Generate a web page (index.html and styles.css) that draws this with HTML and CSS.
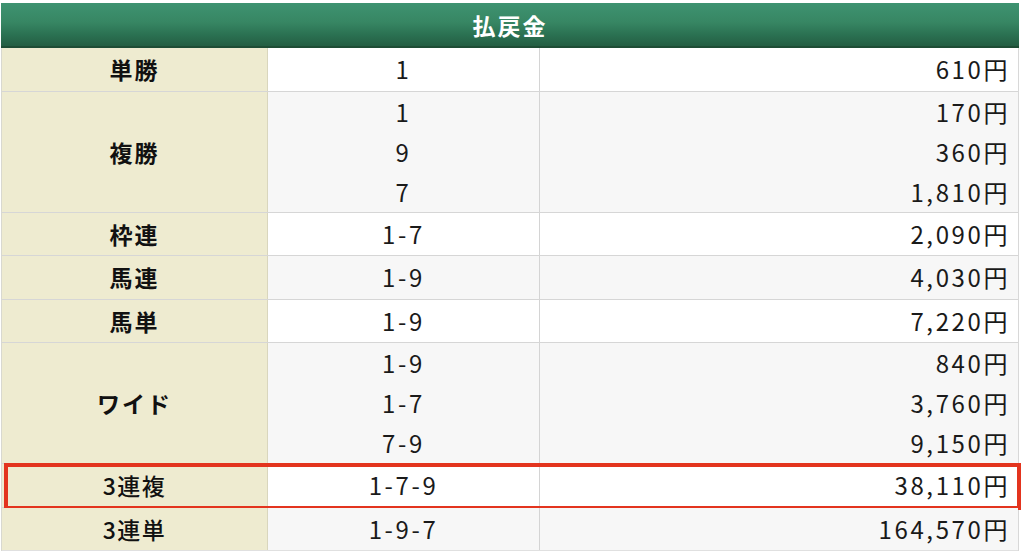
FILE: index.html
```html
<!DOCTYPE html>
<html lang="ja">
<head>
<meta charset="utf-8">
<link rel="stylesheet" href="styles.css">
</head>
<body>
<div class="payout">
  <div class="head">払戻金</div>
  <div class="row r-white">
    <div class="label">単勝</div>
    <div class="nums"><div class="line">1</div></div>
    <div class="yen"><div class="line">610円</div></div>
  </div>
  <div class="row r-gray multi">
    <div class="label">複勝</div>
    <div class="nums"><div class="line">1</div><div class="line">9</div><div class="line">7</div></div>
    <div class="yen"><div class="line">170円</div><div class="line">360円</div><div class="line">1,810円</div></div>
  </div>
  <div class="row r-white">
    <div class="label">枠連</div>
    <div class="nums"><div class="line">1-7</div></div>
    <div class="yen"><div class="line">2,090円</div></div>
  </div>
  <div class="row r-gray">
    <div class="label">馬連</div>
    <div class="nums"><div class="line">1-9</div></div>
    <div class="yen"><div class="line">4,030円</div></div>
  </div>
  <div class="row r-white">
    <div class="label">馬単</div>
    <div class="nums"><div class="line">1-9</div></div>
    <div class="yen"><div class="line">7,220円</div></div>
  </div>
  <div class="row r-gray multi">
    <div class="label">ワイド</div>
    <div class="nums"><div class="line">1-9</div><div class="line">1-7</div><div class="line">7-9</div></div>
    <div class="yen"><div class="line">840円</div><div class="line">3,760円</div><div class="line">9,150円</div></div>
  </div>
  <div class="row r-white hit">
    <div class="label light">3連複</div>
    <div class="nums"><div class="line">1-7-9</div></div>
    <div class="yen"><div class="line">38,110円</div></div>
    <div class="mark"></div>
  </div>
  <div class="row r-gray last">
    <div class="label light">3連単</div>
    <div class="nums"><div class="line">1-9-7</div></div>
    <div class="yen"><div class="line">164,570円</div></div>
  </div>
</div>
</body>
</html>
```

FILE: styles.css
```css
html, body {
  margin: 0;
  padding: 0;
  background: #ffffff;
}
body {
  padding: 3px 5px 0 1px;
  font-family: "Noto Sans CJK JP", "Noto Sans", sans-serif;
  color: #1a1a1a;
}
.payout {
  width: 1018px;
  border-left: 1px solid #d8d8d0;
  border-right: 1px solid #d8d8d8;
  box-sizing: border-box;
}
.head {
  height: 45px;
  box-sizing: border-box;
  background: linear-gradient(#3e9371 0%, #378663 45%, #2a7051 75%, #245e43 100%);
  border-bottom: 2px solid #1e4d35;
  box-shadow: 0 1px 0 #d8e2d8;
  color: #fff;
  font-weight: bold;
  font-size: 23px;
  display: flex;
  align-items: center;
  justify-content: center;
  letter-spacing: 2px;
  margin-left: -1px;
  margin-right: -1px;
}
.row {
  display: grid;
  grid-template-columns: 266px 272px 1fr;
  border-bottom: 1px solid #d6d6d6;
  position: relative;
  height: 43.5px;
  box-sizing: border-box;
}
.row.multi { height: 121px; }
.row.last { border-bottom: 1px solid #e0e0e0; }
.r-white .nums, .r-white .yen { background: #ffffff; }
.r-gray .nums, .r-gray .yen { background: #f7f7f7; }
.label {
  background: #eeebd0;
  border-right: 1px solid #d9d6bd;
  display: flex;
  align-items: center;
  justify-content: center;
  font-weight: bold;
  font-size: 23px;
  letter-spacing: 2px;
  color: #111;
}
.label.light { font-weight: 500; letter-spacing: 1.5px; }
.nums {
  border-right: 1px solid #d4d4d4;
  display: flex;
  flex-direction: column;
  justify-content: center;
  text-align: center;
  font-size: 24px;
}
.yen {
  display: flex;
  flex-direction: column;
  justify-content: center;
  text-align: right;
  padding-right: 8px;
  font-size: 24px;
}
.line {
  height: 40px;
  line-height: 40px;
  letter-spacing: 2.6px;
}
.mark {
  position: absolute;
  left: 2px;
  right: -3px;
  top: -1px;
  bottom: -3px;
  border: 4px solid #e3341e;
  pointer-events: none;
}
```
